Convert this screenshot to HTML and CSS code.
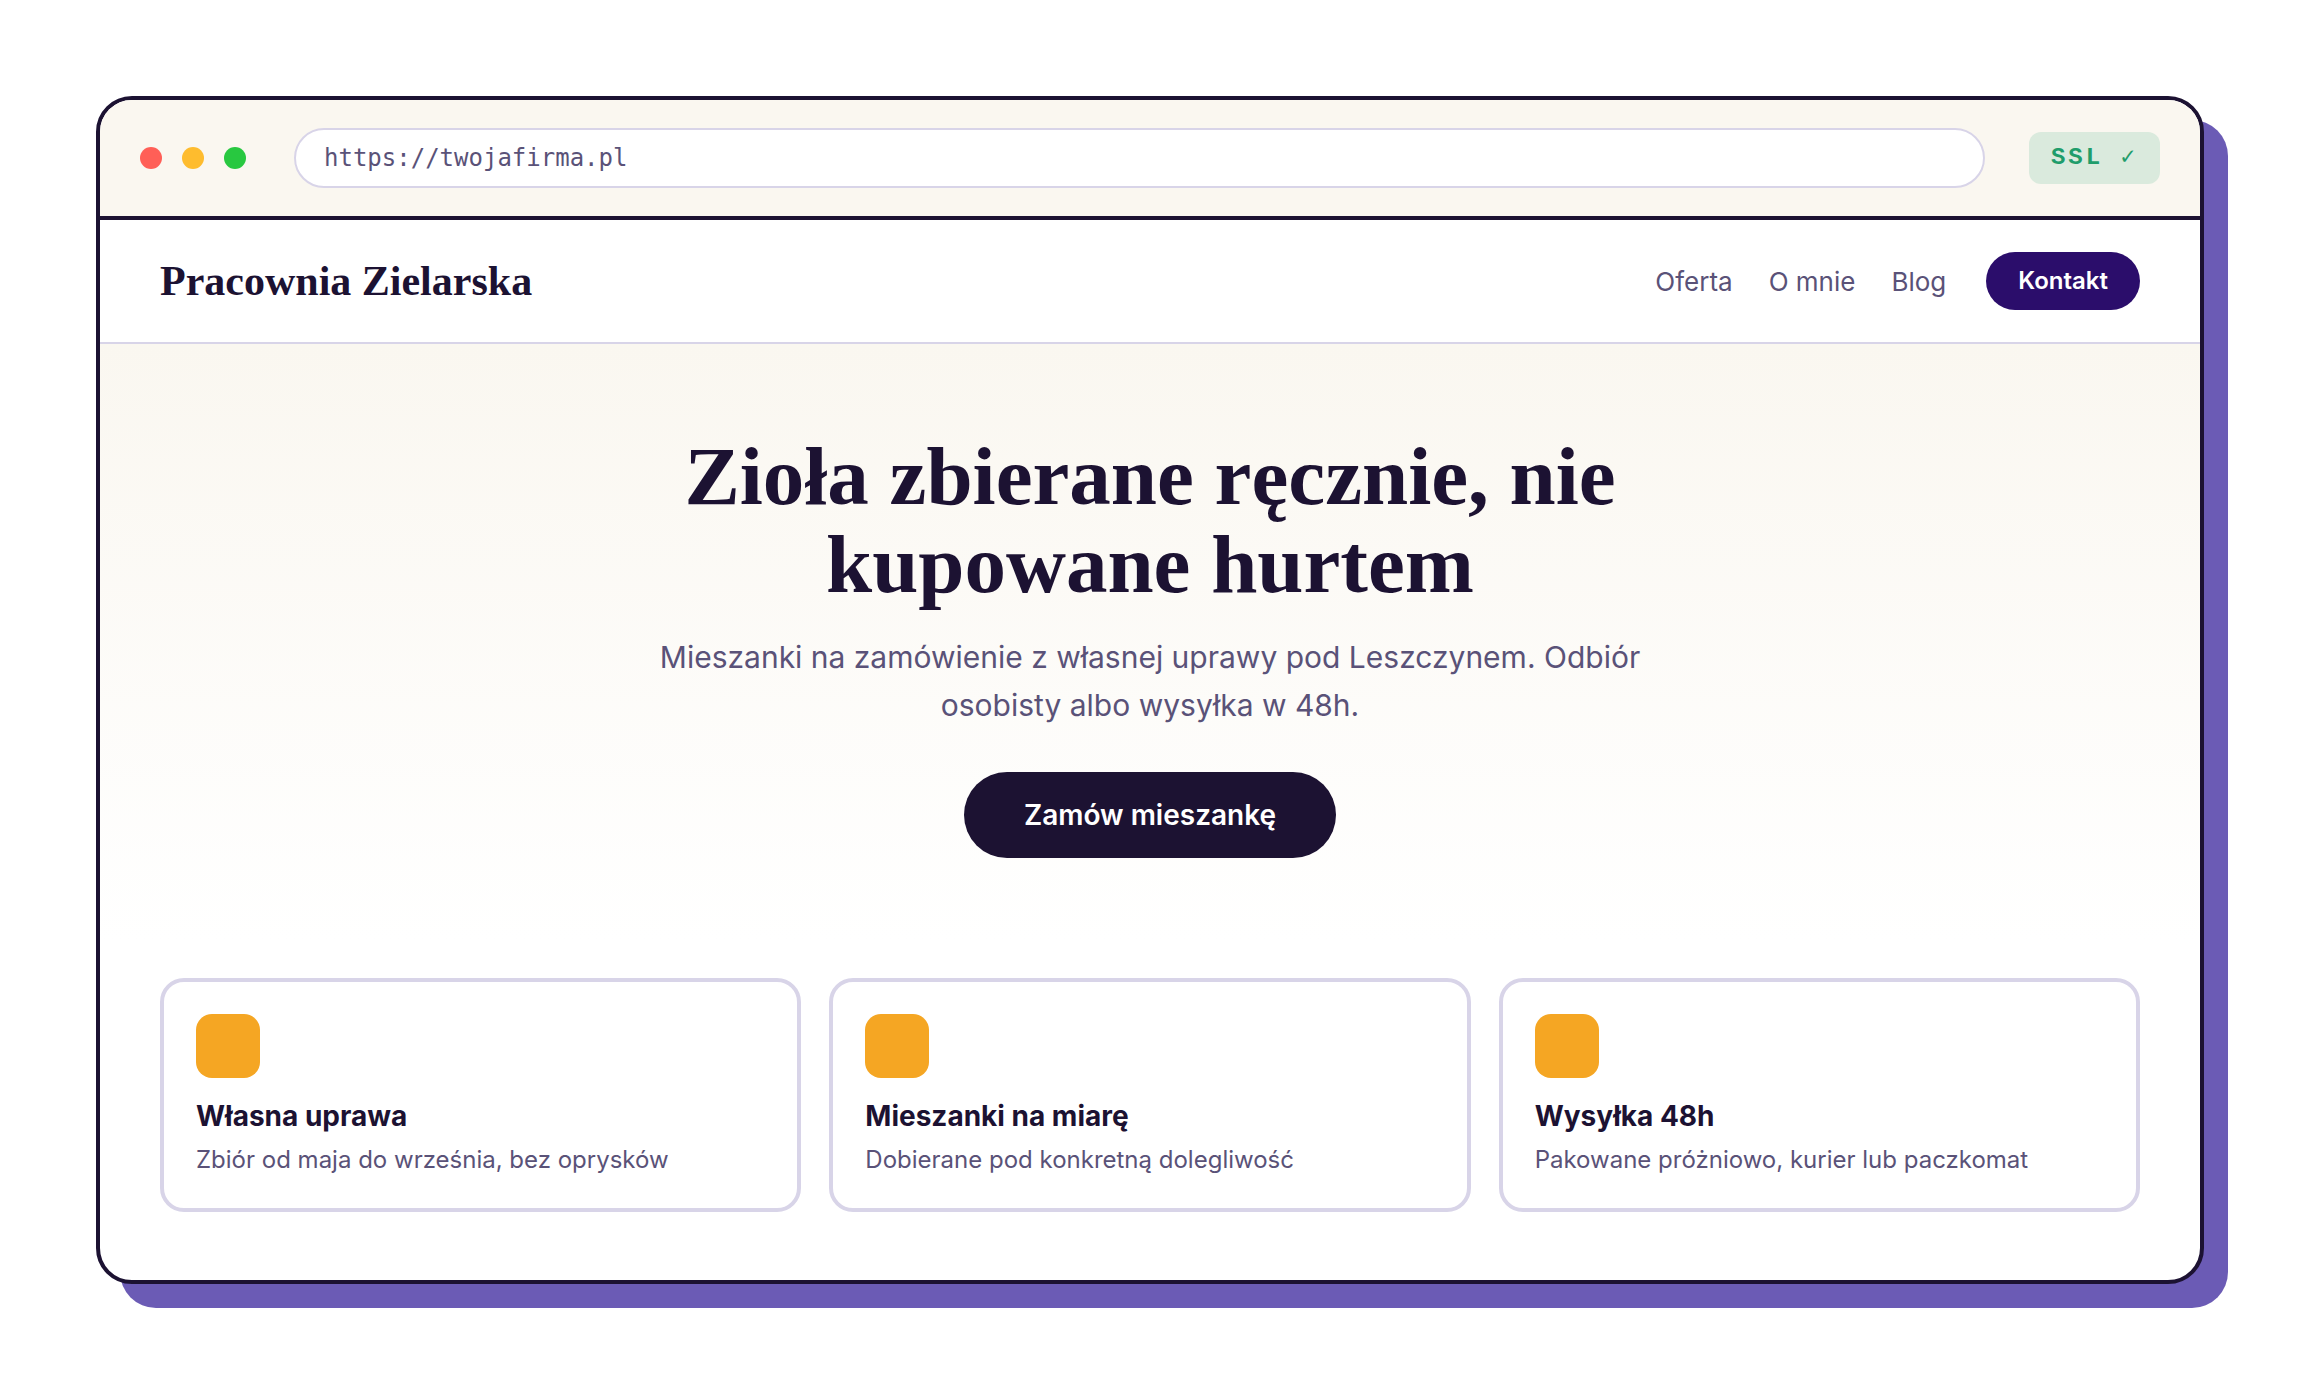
FILE: index.html
```html
<!DOCTYPE html>
<html lang="pl">
  <head>
    <meta charset="utf-8" />
    <meta name="viewport" content="width=device-width, initial-scale=1" />
    <title>Pracownia Zielarska</title>
    <link rel="stylesheet" href="styles.css">
  </head>
  <body>
    <div class="browser">
      <div class="browser-bar">
        <div class="dots">
          <span class="dot red"></span>
          <span class="dot yellow"></span>
          <span class="dot green"></span>
        </div>
        <input class="url" type="text" value="https://twojafirma.pl" aria-label="Adres strony" readonly />
        <span class="ssl">SSL ✓</span>
      </div>

      <header class="site-header">
        <a class="logo" href="#">Pracownia Zielarska</a>
        <nav class="nav">
          <a href="#oferta">Oferta</a>
          <a href="#o-mnie">O mnie</a>
          <a href="#blog">Blog</a>
          <a class="contact" href="#kontakt">Kontakt</a>
        </nav>
      </header>

      <main>
        <section class="hero">
          <h1>Zioła zbierane ręcznie, nie kupowane hurtem</h1>
          <p>Mieszanki na zamówienie z własnej uprawy pod Leszczynem. Odbiór osobisty albo wysyłka w 48h.</p>
          <button class="order" type="button">Zamów mieszankę</button>
        </section>

        <section class="cards" id="oferta">
          <article class="card">
            <div class="card-icon"></div>
            <h2>Własna uprawa</h2>
            <p>Zbiór od maja do września, bez oprysków</p>
          </article>
          <article class="card">
            <div class="card-icon"></div>
            <h2>Mieszanki na miarę</h2>
            <p>Dobierane pod konkretną dolegliwość</p>
          </article>
          <article class="card">
            <div class="card-icon"></div>
            <h2>Wysyłka 48h</h2>
            <p>Pakowane próżniowo, kurier lub paczkomat</p>
          </article>
        </section>
      </main>
    </div>
  </body>
</html>
```
FILE: styles.css
```css
:root {
  --ink: #1c1232;
  --muted: #5a5278;
  --line: #d8d4e8;
  --cream: #faf7f0;
  --violet: #6b5bb5;
  --indigo: #2b0d6b;
  --amber: #f5a623;
}

* {
  box-sizing: border-box;
}

body {
  margin: 0;
  padding: 96px;
  background: white;
  color: var(--ink);
  font-family: Inter, "Liberation Sans", sans-serif;
}

h1,
h2,
p {
  margin: 0;
}

a {
  color: inherit;
  text-decoration: none;
}

.browser {
  border: 4px solid var(--ink);
  border-radius: 36px;
  background: white;
  box-shadow: 24px 24px 0 var(--violet);
  overflow: hidden;
}

/* Browser chrome */
.browser-bar {
  display: flex;
  align-items: center;
  gap: 44px;
  padding: 28px 40px;
  background: var(--cream);
  border-bottom: 4px solid var(--ink);
}

.dots {
  display: flex;
  gap: 20px;
  margin-right: 4px;
}

.dot {
  width: 22px;
  height: 22px;
  border-radius: 50%;
}

.red {
  background: #ff5f57;
}

.yellow {
  background: #febc2e;
}

.green {
  background: #28c840;
}

.url {
  flex: 1;
  min-width: 0;
  height: 60px;
  padding: 0 28px;
  border: 2px solid var(--line);
  border-radius: 30px;
  background: white;
  color: var(--muted);
  font-family: "DejaVu Sans Mono", monospace;
  font-size: 24px;
}

.ssl {
  padding: 0 22px;
  border-radius: 12px;
  background: #daeadd;
  color: #1f9d6b;
  font-family: "Liberation Mono", "DejaVu Sans Mono", monospace;
  font-size: 24px;
  font-weight: 700;
  line-height: 52px;
  letter-spacing: 3px;
}

/* Site header */
.site-header {
  display: flex;
  align-items: center;
  justify-content: space-between;
  padding: 32px 60px;
  border-bottom: 2px solid var(--line);
}

.logo {
  font-family: "Liberation Serif", serif;
  font-size: 42px;
  font-weight: 700;
  line-height: 58px;
}

.nav {
  display: flex;
  align-items: center;
  gap: 36px;
  color: var(--muted);
  font-size: 26px;
}

.contact {
  margin-left: 4px;
  padding: 0 32px;
  border-radius: 29px;
  background: var(--indigo);
  color: white;
  font-size: 24px;
  font-weight: 600;
  line-height: 58px;
}

/* Hero */
.hero {
  display: flex;
  flex-direction: column;
  align-items: center;
  padding: 88px 60px 84px;
  background: linear-gradient(var(--cream), white);
  text-align: center;
}

.hero h1 {
  max-width: 1100px;
  font-family: "Liberation Serif", serif;
  font-size: 83px;
  font-weight: 700;
  line-height: 88px;
}

.hero p {
  max-width: 1040px;
  margin-top: 25px;
  color: var(--muted);
  font-size: 30px;
  line-height: 48px;
}

.order {
  margin-top: 43px;
  padding: 0 60px;
  border: 0;
  border-radius: 43px;
  background: var(--ink);
  color: white;
  font-family: inherit;
  font-size: 28px;
  font-weight: 600;
  line-height: 86px;
}

/* Cards */
.cards {
  display: grid;
  grid-template-columns: repeat(3, 1fr);
  gap: 28px;
  padding: 36px 60px 68px;
}

.card {
  padding: 32px;
  border: 4px solid var(--line);
  border-radius: 24px;
}

.card-icon {
  width: 64px;
  height: 64px;
  border-radius: 16px;
  background: var(--amber);
}

.card h2 {
  margin-top: 20px;
  font-size: 28px;
  line-height: 36px;
}

.card p {
  margin-top: 10px;
  color: var(--muted);
  font-size: 24px;
  line-height: 32px;
}

@media (max-width: 1100px) {
  body {
    padding: 32px;
  }

  .site-header {
    flex-wrap: wrap;
    gap: 24px;
  }

  .cards {
    grid-template-columns: 1fr;
  }
}
```
